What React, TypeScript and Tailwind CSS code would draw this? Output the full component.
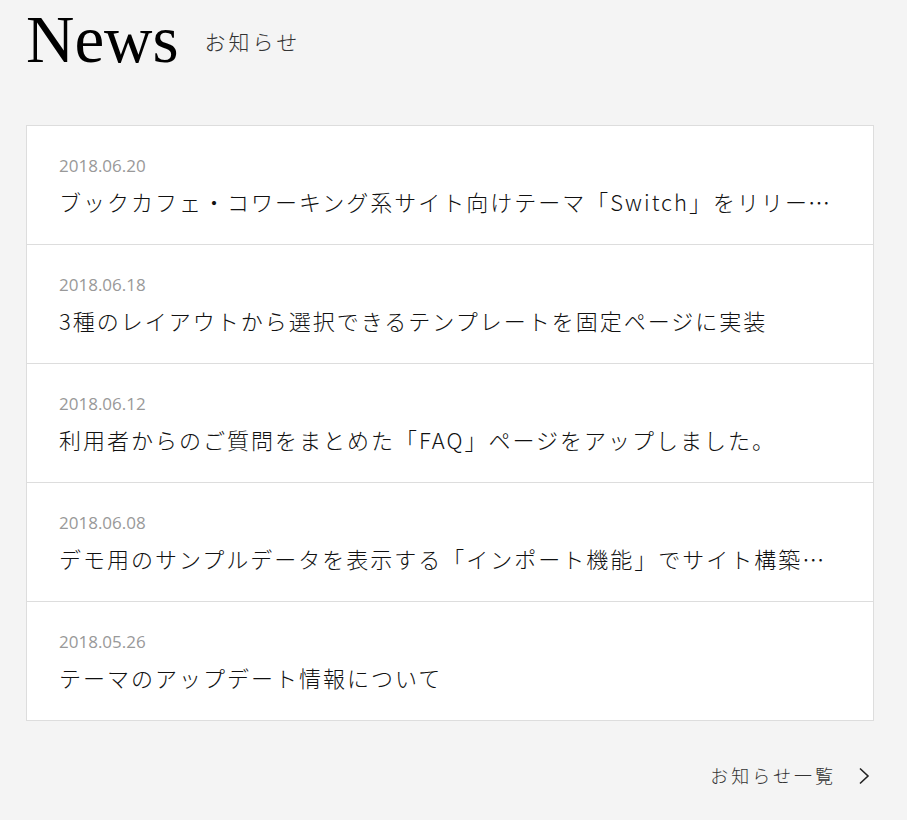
import React from "react";

const items = [
  { date: "2018.06.20", title: "ブックカフェ・コワーキング系サイト向けテーマ「Switch」をリリースしました。" },
  { date: "2018.06.18", title: "3種のレイアウトから選択できるテンプレートを固定ページに実装" },
  { date: "2018.06.12", title: "利用者からのご質問をまとめた「FAQ」ページをアップしました。" },
  { date: "2018.06.08", title: "デモ用のサンプルデータを表示する「インポート機能」でサイト構築が簡単に" },
  { date: "2018.05.26", title: "テーマのアップデート情報について" },
];

const jp = { fontFamily: '"Noto Sans CJK JP", "Noto Sans", sans-serif' };

export default function App() {
  return (
    <div className="min-h-[820px] w-[907px] bg-[#f4f4f4] pl-[26px] pr-[33px]" style={jp}>
      <div className="flex items-start">
        <h1
          className="text-[67px] leading-[78px] text-black"
          style={{ fontFamily: '"Liberation Serif", "Times New Roman", serif' }}
        >
          News
        </h1>
        <span className="ml-[26px] mt-[25px] text-[21px] leading-[32px] tracking-[3px] text-[#333] font-light">
          お知らせ
        </span>
      </div>

      <div className="mt-[47px] border border-[#dddddd] bg-white">
        {items.map((it, i) => (
          <div
            key={i}
            className={
              "px-[32px] pt-[28px] pb-[25px] " + (i < items.length - 1 ? "border-b border-[#dddddd]" : "")
            }
          >
            <div
              className="text-[17px] leading-[24px] text-[#999999]"
              style={{ fontFamily: '"Open Sans", "Noto Sans", sans-serif', fontWeight: 400 }}
            >
              {it.date}
            </div>
            <div className="mt-[6px] overflow-hidden text-ellipsis whitespace-nowrap text-[22px] leading-[35px] tracking-[2px] text-[#111111] font-light">
              {it.title}
            </div>
          </div>
        ))}
      </div>

      <div className="mt-[41px] flex items-center justify-end pr-[4px]">
        <span className="text-[18px] tracking-[3px] text-[#333] font-light">お知らせ一覧</span>
        <svg className="ml-[22px]" width="12" height="18" viewBox="0 0 12 18" fill="none">
          <path d="M2 1.5 L10 9 L2 16.5" stroke="#222" strokeWidth="1.6" />
        </svg>
      </div>
    </div>
  );
}
